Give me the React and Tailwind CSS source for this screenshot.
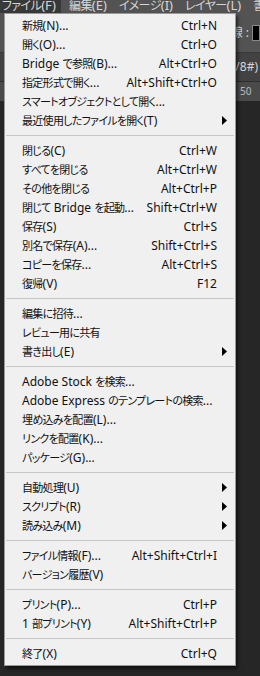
import React from "react";

const groups = [
  [
    { label: "新規(N)...", key: "Ctrl+N" },
    { label: "開く(O)...", key: "Ctrl+O" },
    { label: "Bridge で参照(B)...", key: "Alt+Ctrl+O" },
    { label: "指定形式で開く...", key: "Alt+Shift+Ctrl+O" },
    { label: "スマートオブジェクトとして開く..." },
    { label: "最近使用したファイルを開く(T)", sub: true },
  ],
  [
    { label: "閉じる(C)", key: "Ctrl+W" },
    { label: "すべてを閉じる", key: "Alt+Ctrl+W" },
    { label: "その他を閉じる", key: "Alt+Ctrl+P" },
    { label: "閉じて Bridge を起動...", key: "Shift+Ctrl+W" },
    { label: "保存(S)", key: "Ctrl+S" },
    { label: "別名で保存(A)...", key: "Shift+Ctrl+S" },
    { label: "コピーを保存...", key: "Alt+Ctrl+S" },
    { label: "復帰(V)", key: "F12" },
  ],
  [
    { label: "編集に招待..." },
    { label: "レビュー用に共有" },
    { label: "書き出し(E)", sub: true },
  ],
  [
    { label: "Adobe Stock を検索..." },
    { label: "Adobe Express のテンプレートの検索..." },
    { label: "埋め込みを配置(L)..." },
    { label: "リンクを配置(K)..." },
    { label: "パッケージ(G)..." },
  ],
  [
    { label: "自動処理(U)", sub: true },
    { label: "スクリプト(R)", sub: true },
    { label: "読み込み(M)", sub: true },
  ],
  [
    { label: "ファイル情報(F)...", key: "Alt+Shift+Ctrl+I" },
    { label: "バージョン履歴(V)" },
  ],
  [
    { label: "プリント(P)...", key: "Ctrl+P" },
    { label: "1 部プリント(Y)", key: "Alt+Shift+Ctrl+P" },
  ],
  [{ label: "終了(X)", key: "Ctrl+Q" }],
];

const topMenus = ["ファイル(F)", "編集(E)", "イメージ(I)", "レイヤー(L)", "書式(Y)"];

const font = { fontFamily: '"Noto Sans", "Noto Sans CJK JP", sans-serif' };

// Windows UI font has narrower kana/kanji than Noto CJK, so shrink CJK runs a bit
const cjk = /([\u3000-\u30ff\u4e00-\u9fff\uff00-\uffef]+)/;

const Label = ({ text, cjkClass }) =>
  text.split(cjk).map((part, i) =>
    cjk.test(part) ? (
      <span key={i} className={cjkClass}>
        {part}
      </span>
    ) : (
      <span key={i}>{part}</span>
    )
  );

const MenuRow = ({ item }) => (
  <div className="flex h-[19px] items-center pl-[17px] pr-[18px] text-[12px] leading-none text-[#111]">
    <span className="flex-1 whitespace-nowrap">
      <Label text={item.label} cjkClass="text-[11px] tracking-[-0.7px]" />
    </span>
    {item.key && <span className="whitespace-nowrap">{item.key}</span>}
    {item.sub && (
      <svg width="5" height="9" viewBox="0 0 5 9" className="mr-[-10px]">
        <path d="M0 0 L5 4.5 L0 9 Z" fill="#000" />
      </svg>
    )}
  </div>
);

const App = () => {
  return (
    <div
      className="relative h-[676px] w-[260px] overflow-hidden bg-[#262626] [font-feature-settings:'palt']"
      style={font}
    >
      {/* Menu bar */}
      <div className="flex h-[13px] items-center bg-[#535353] text-[13px] text-[#d6d6d6]">
        {topMenus.map((m, i) => (
          <div
            key={m}
            className={
              i === 0
                ? "flex h-full items-center whitespace-nowrap bg-[#383838] pl-[2px] pr-[5px] pb-[2px]"
                : "flex h-full items-center whitespace-nowrap pl-[8px] pr-[4px] pb-[2px]"
            }
          >
            <Label text={m} cjkClass="text-[12px] tracking-[-0.6px]" />
          </div>
        ))}
      </div>

      {/* Photoshop workspace behind the menu */}
      <div className="flex h-[39px] items-center justify-end bg-[#535353] text-[12px] text-[#d6d6d6]">
        <span className="mr-[3px]">線 :</span>
        <div className="h-[16px] w-[8px] border border-[#888] bg-black"></div>
      </div>
      <div className="h-[1px] bg-[#3a3a3a]"></div>
      <div className="flex h-[28px] items-center justify-end bg-[#424242] pr-[2px] text-[12px] text-[#d6d6d6]">
        /8#)
      </div>
      <div className="flex h-[20px] items-center border-t border-[#2e2e2e] bg-[#4a4a4a] pl-[240px] text-[10px] text-[#bbb]">
        50
      </div>
      <div className="flex-1 bg-[#282828]"></div>

      {/* File dropdown */}
      <div className="absolute left-[4px] top-[13px] w-[232px] border border-[#9a9a9a] bg-[#f0f0f0] pb-[2px] pt-[2px] shadow-[2px_3px_3px_rgba(0,0,0,0.55)]">
        {groups.map((g, gi) => (
          <div key={gi}>
            {gi > 0 && (
              <div className="px-[1px] py-[5px]">
                <div className="h-[1px] bg-[#c6c6c6]"></div>
              </div>
            )}
            {g.map((item) => (
              <MenuRow key={item.label} item={item} />
            ))}
          </div>
        ))}
      </div>
    </div>
  );
};

export default App;
